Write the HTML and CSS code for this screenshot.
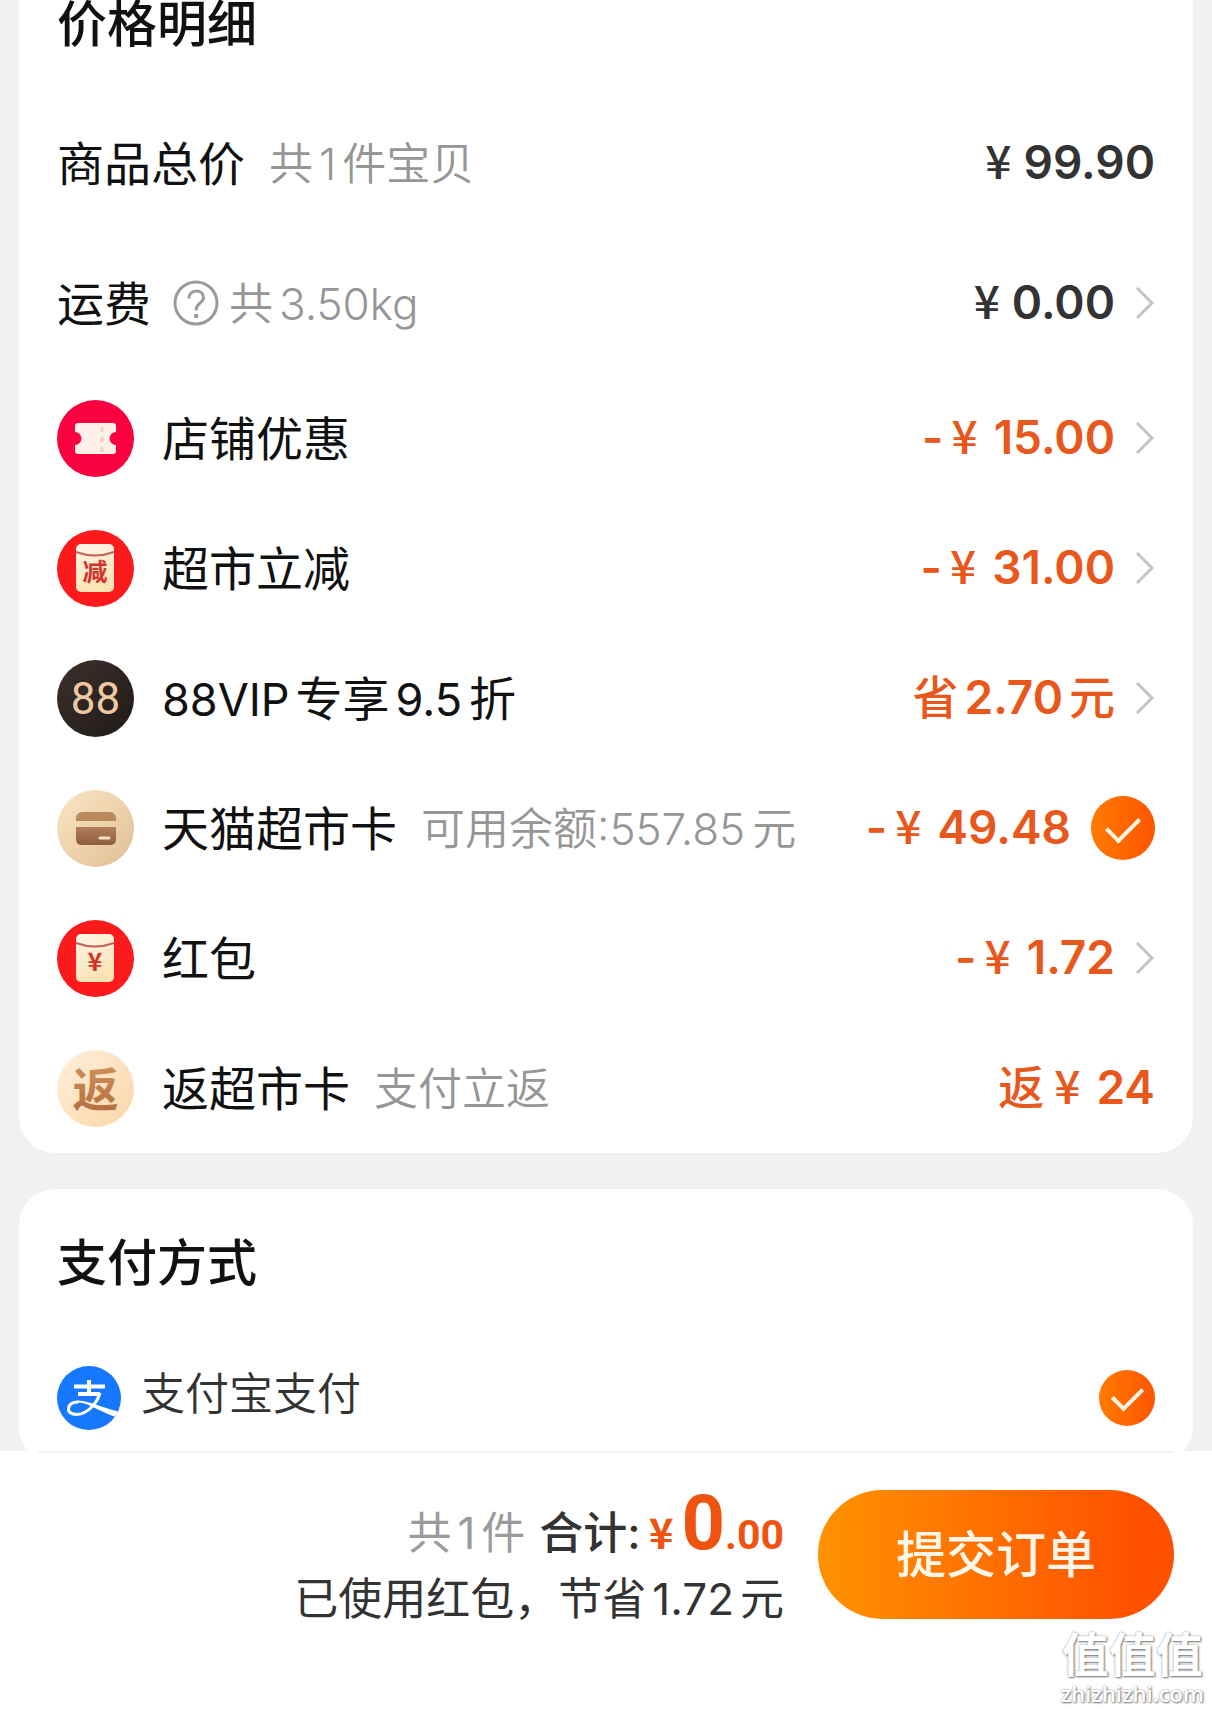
FILE: index.html
```html
<!DOCTYPE html>
<html lang="zh-CN">
<head>
<meta charset="utf-8">
<meta name="viewport" content="width=device-width, initial-scale=1">
<title>确认订单</title>
<link rel="stylesheet" href="styles.css">
</head>
<body>
<svg class="defs" aria-hidden="true">
  <defs>
    <linearGradient id="cream" x1="0" y1="0" x2="0.4" y2="1"><stop offset="0" stop-color="#fff6ea"/><stop offset="1" stop-color="#fbe3b4"/></linearGradient>
    <linearGradient id="gold" x1="0" y1="0" x2="1" y2="1"><stop offset="0" stop-color="#fbe6c6"/><stop offset="1" stop-color="#dfbf94"/></linearGradient>
    <linearGradient id="peach" x1="0" y1="0" x2="1" y2="1"><stop offset="0" stop-color="#fff0de"/><stop offset="1" stop-color="#fad5a5"/></linearGradient>
    <linearGradient id="brown" x1="0" y1="0" x2="0" y2="1"><stop offset="0" stop-color="#d6985f"/><stop offset="1" stop-color="#b06a3c"/></linearGradient>
    <linearGradient id="card-brown" x1="0" y1="0" x2="0" y2="1"><stop offset="0" stop-color="#b27e5a"/><stop offset="1" stop-color="#8d5c42"/></linearGradient>
    <linearGradient id="dark" x1="0" y1="0" x2="1" y2="1"><stop offset="0" stop-color="#3d302b"/><stop offset="1" stop-color="#1f1a18"/></linearGradient>
    <symbol id="chevron" viewBox="0 0 20 34"><path d="M2 2 L17 17 L2 32" fill="none" stroke="#c4c4c4" stroke-width="3"/></symbol>
  </defs>
</svg>

<main class="content">
  <section class="card card-price">
    <h2 class="card-title">价格明细</h2>

    <div class="row row-plain">
      <span class="label">商品总价</span>
      <span class="note">共<span class="n">1</span>件宝贝</span>
      <span class="amount amount-dark"><span class="price"><span class="yen">¥</span><span>99.90</span></span></span>
    </div>

    <div class="row row-plain">
      <span class="label">运费</span>
      <span class="shipping">
        <button class="help" type="button" aria-label="运费说明">
          <svg viewBox="0 0 46 46" width="46" height="46" fill="none" stroke="#9b9b9b" stroke-width="3"><circle cx="23" cy="23" r="21"/><path d="M16 18.500c0-4.500 3-7.500 7.300-7.500 4.200 0 7.200 2.800 7.200 6.500 0 5.500-7.300 6-7.300 12v1"/><circle cx="23.200" cy="36" r="2.300" fill="#9b9b9b" stroke="none"/></svg>
        </button>
        <span class="note">共<span class="n">3.50kg</span></span>
      </span>
      <button class="amount amount-dark" type="button"><span class="price"><span class="yen">¥</span><span>0.00</span></span><svg class="chevron"><use href="#chevron"/></svg></button>
    </div>

    <div class="row">
      <svg class="icon" viewBox="0 0 77 77"><circle cx="38.500" cy="38.500" r="38.500" fill="#fa0240"/><path d="M21 23h35a3 3 0 0 1 3 3v6a6 6 0 0 0 0 13v6a3 3 0 0 1-3 3H21a3 3 0 0 1-3-3v-6a6 6 0 0 0 0-13v-6a3 3 0 0 1 3-3z" fill="#fff1ea"/><path d="M45 27v25" stroke="#fccdc4" stroke-width="3" stroke-dasharray="5 5"/></svg>
      <span class="label">店铺优惠</span>
      <button class="amount" type="button"><span class="price"><span class="minus">-</span><span class="yen">¥</span><span class="figure">15.00</span></span><svg class="chevron"><use href="#chevron"/></svg></button>
    </div>

    <div class="row">
      <svg class="icon" viewBox="0 0 77 77"><circle cx="38.500" cy="38.500" r="38.500" fill="#fb1a1c"/><rect x="19" y="14" width="38" height="48" rx="5" fill="url(#cream)"/><path d="M19 22q19 7 38 0" fill="none" stroke="#c5605a" stroke-width="2"/><text x="38" y="51" class="icon-text icon-text-small">减</text></svg>
      <span class="label">超市立减</span>
      <button class="amount" type="button"><span class="price"><span class="minus">-</span><span class="yen">¥</span><span class="figure">31.00</span></span><svg class="chevron"><use href="#chevron"/></svg></button>
    </div>

    <div class="row">
      <svg class="icon" viewBox="0 0 77 77"><circle cx="38.500" cy="38.500" r="38.500" fill="url(#dark)"/><text x="38.500" y="54" class="icon-text icon-text-vip">88</text></svg>
      <span class="label"><span class="latin">88VIP</span><span class="n">专享</span><span class="latin">9.5</span><span class="after">折</span></span>
      <button class="amount" type="button"><span class="price"><span class="cn">省</span><span class="figure-cn">2.70</span><span class="cn">元</span></span><svg class="chevron"><use href="#chevron"/></svg></button>
    </div>

    <div class="row">
      <svg class="icon" viewBox="0 0 77 77"><circle cx="38.500" cy="38.500" r="38.500" fill="url(#gold)"/><path d="M19 31v-2q0-7 7-7h26q7 0 7 7v2z" fill="#b98a5c"/><path d="M19 37h40v12q0 6-6 6H25q-6 0-6-6z" fill="url(#card-brown)"/><path d="M43 48h9" stroke="#fbe3c4" stroke-width="3" stroke-linecap="round"/></svg>
      <label class="label" for="market-card">天猫超市卡</label>
      <span class="note">可用余额:557.85<span class="after">元</span></span>
      <span class="amount"><span class="price"><span class="minus">-</span><span class="yen">¥</span><span class="figure">49.48</span></span><input class="tick tick-large" id="market-card" type="checkbox" checked></span>
    </div>

    <div class="row">
      <svg class="icon" viewBox="0 0 77 77"><circle cx="38.500" cy="38.500" r="38.500" fill="#fb1a1c"/><rect x="19" y="14" width="38" height="48" rx="5" fill="url(#cream)"/><path d="M19 23q19 7 38 0" fill="none" stroke="#c5605a" stroke-width="2"/><text x="38" y="51" class="icon-text icon-text-small">¥</text></svg>
      <span class="label">红包</span>
      <button class="amount" type="button"><span class="price"><span class="minus">-</span><span class="yen">¥</span><span class="figure">1.72</span></span><svg class="chevron"><use href="#chevron"/></svg></button>
    </div>

    <div class="row">
      <svg class="icon" viewBox="0 0 77 77"><circle cx="38.500" cy="38.500" r="38.500" fill="url(#peach)"/><text x="38.500" y="56" class="icon-text icon-text-back">返</text></svg>
      <span class="label">返超市卡</span>
      <span class="note">支付立返</span>
      <span class="amount"><span class="price"><span class="cn">返</span><span class="yen yen-after">¥</span><span class="figure">24</span></span></span>
    </div>
  </section>

  <section class="card card-pay">
    <h2 class="card-title">支付方式</h2>
    <div class="pay-row">
      <svg class="pay-icon" viewBox="0 0 64 64"><defs><clipPath id="disc"><circle cx="32" cy="32" r="32"/></clipPath></defs><g clip-path="url(#disc)"><rect width="64" height="64" fill="#1677ff"/><g fill="none" stroke="#fff"><path d="M17 20.500h31M21 28h22M32 14v14" stroke-width="4"/><path d="M43 27C40 37 31 48 20 48.500 14 48.500 11 46 11.500 42.500 12 38 16 36 21 36" stroke-width="3"/><path d="M20 34.500C30 34.500 39 39.500 63 46L60 51.500C47 47 37 41 29 38 25 36.500 22 36.500 20 37z" fill="#fff" stroke="none"/></g></g></svg>
      <label class="pay-name" for="alipay">支付宝支付</label>
      <input class="tick" id="alipay" name="payment" type="radio" checked>
    </div>
  </section>
</main>

<footer class="bar">
  <div class="summary">
    <p class="total"><span class="count">共<span class="n">1</span>件</span><span class="sum-label">合计:</span><span class="sum"><span class="sum-yen">¥</span><span class="sum-int">0</span><span class="sum-cents">.00</span></span></p>
    <p class="saved">已使用红包，节省<span class="n">1.72</span>元</p>
  </div>
  <button class="submit" type="button">提交订单</button>
  <div class="watermark"><span class="mark-name">值值值</span><span class="mark-site">zhizhizhi.com</span></div>
</footer>
</body>
</html>
```

FILE: styles.css
```css
* {
  box-sizing: border-box;
}

body {
  margin: 0;
  min-height: 100vh;
  display: flex;
  flex-direction: column;
  background: #f1f1f1;
  color: #111;
  font-family: Inter, "Noto Sans CJK SC", sans-serif;
  font-size: 44px;
  line-height: 48px;
  white-space: nowrap;
}

button {
  padding: 0;
  border: 0;
  background: none;
  color: inherit;
  font: inherit;
  cursor: pointer;
}

h2,
p {
  margin: 0;
}

.defs {
  position: absolute;
  width: 0;
  height: 0;
}

/* Cards */
.content {
  display: flex;
  flex-direction: column;
  gap: 36px;
  padding: 0 19px;
}

.card {
  padding: 0 38px;
  background: #fff;
  border-radius: 36px;
}

.card-price {
  border-top-left-radius: 0;
  border-top-right-radius: 0;
}

.card-title {
  font-size: 50px;
  font-weight: 500;
}

.card-price .card-title {
  margin-bottom: 45px;
}

/* Price rows */
.row {
  display: flex;
  align-items: center;
  height: 130px;
}

.row-plain {
  height: 140px;
}

.icon {
  flex: none;
  width: 77px;
  height: 77px;
  margin-right: 28px;
}

.label {
  padding-top: 2px;
  font-size: 47px;
}

.latin {
  font-size: 45px;
}

.note {
  padding-top: 2px;
  color: #969696;
  font-weight: 350;
}

.label + .note {
  margin-left: 24px;
}

.n {
  margin: 0 6px;
}

.after {
  margin-left: 7px;
}

.shipping {
  display: flex;
  align-items: center;
  gap: 10px;
  margin-left: 22px;
}

.help {
  display: flex;
}

.amount {
  display: flex;
  align-items: center;
  margin-left: auto;
  color: #e8571b;
  font-size: 46px;
  font-weight: 600;
}

.price {
  display: flex;
  align-items: baseline;
  padding-bottom: 5px;
}

.amount-dark {
  color: #333;
}

.amount-dark .price {
  gap: 12px;
}

.cn,
.yen {
  font-family: "Noto Sans CJK SC", sans-serif;
  font-weight: 500;
}

.minus {
  margin-right: 8px;
}

.figure {
  margin-left: 16px;
}

.figure-cn {
  margin: 0 6px;
}

.yen-after {
  margin-left: 10px;
}

.chevron {
  width: 20px;
  height: 34px;
  margin-left: 20px;
}

/* Text inside the round icons */
.icon-text {
  font-family: "Noto Sans CJK SC", sans-serif;
  text-anchor: middle;
}

.icon-text-small {
  fill: #d3322c;
  font-size: 25px;
  font-weight: 700;
}

.icon-text-vip {
  fill: #ecc9a0;
  font-family: Roboto, sans-serif;
  font-size: 44px;
  font-weight: 400;
}

.icon-text-back {
  fill: url(#brown);
  font-size: 46px;
  font-weight: 700;
}

/* Round check marks */
.tick {
  appearance: none;
  display: grid;
  place-items: center;
  flex: none;
  width: 56px;
  height: 56px;
  margin: 0 0 0 auto;
  border-radius: 50%;
  background: linear-gradient(90deg, #ff7a00, #ff5500);
}

.tick::before {
  content: "";
  width: 25px;
  height: 14px;
  border: solid #fff3e4;
  border-width: 0 0 4px 4px;
  transform: translateY(-3px) rotate(-45deg);
}

.tick-large {
  width: 64px;
  height: 64px;
  margin-left: 20px;
}

.tick-large::before {
  width: 28px;
  height: 15px;
}

/* Payment */
.card-pay {
  padding-top: 50px;
  padding-bottom: 12px;
}

.pay-row {
  display: flex;
  align-items: center;
  height: 106px;
  margin-top: 58px;
}

.pay-icon {
  width: 64px;
  height: 64px;
  margin-right: 20px;
}

.pay-name {
  padding-bottom: 8px;
  color: #333;
  font-weight: 350;
}

/* Bottom bar */
.bar {
  position: relative;
  flex: 1;
  display: flex;
  align-items: flex-start;
  justify-content: flex-end;
  gap: 34px;
  min-height: 260px;
  margin-top: -12px;
  padding: 39px 38px 0;
  background: #fff;
}

.bar::before {
  content: "";
  position: absolute;
  top: 0;
  left: 38px;
  right: 38px;
  height: 2px;
  background: #f3f3f3;
}

.summary {
  display: flex;
  flex-direction: column;
  align-items: flex-end;
  color: #333;
}

.total {
  display: flex;
  align-items: baseline;
  height: 85px;
  line-height: 66px;
}

.count {
  margin-right: 14px;
  color: #9b9b9b;
}

.sum-label {
  font-weight: 500;
}

.sum {
  color: #f0530f;
  font-family: Roboto, sans-serif;
  font-weight: 700;
}

.sum-yen {
  margin: 0 8px;
  font-family: "Noto Sans CJK SC", sans-serif;
  font-size: 42px;
}

.sum-int {
  font-size: 76px;
}

.sum-cents {
  font-size: 41px;
}

.submit {
  width: 356px;
  height: 129px;
  border-radius: 65px;
  background: linear-gradient(90deg, #ff9200, #ff7200 45%, #ff5000 90%);
  color: #fff6ea;
  font-size: 50px;
  font-weight: 500;
}

.watermark {
  position: absolute;
  right: 8px;
  bottom: 4px;
  display: flex;
  flex-direction: column;
  align-items: center;
  color: #fff;
  text-shadow: 1px 1px 2px #777, 0 0 2px #999;
}

.mark-name {
  font-size: 47px;
  font-weight: 700;
}

.mark-site {
  font-family: "Open Sans", sans-serif;
  font-size: 22px;
  font-weight: 600;
  line-height: 28px;
}
```
